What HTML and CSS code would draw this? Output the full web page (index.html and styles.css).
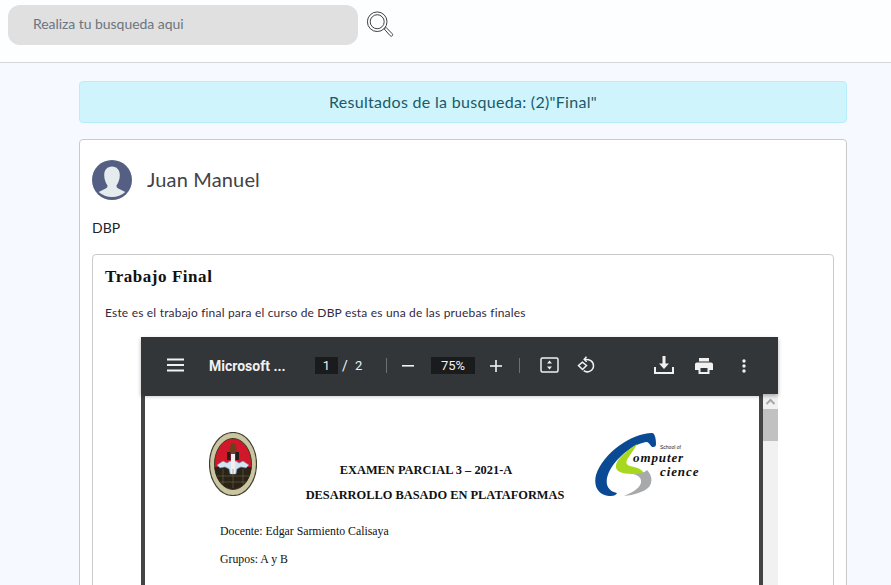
FILE: index.html
```html
<!DOCTYPE html>
<html lang="es">
<head>
<meta charset="utf-8">
<title>Resultados</title>
<link rel="stylesheet" href="styles.css">
</head>
<body>
<header class="topbar">
  <div class="search-input">Realiza tu busqueda aqui</div>
  <svg class="search-icon" width="28" height="28" viewBox="0 0 30 30" fill="none" stroke="#333" stroke-width="1">
    <circle cx="12" cy="11.5" r="10.5"/>
    <circle cx="12" cy="11.5" r="7.5"/>
    <path d="M19.5 19.2l2-1.7 6.6 6.9c.7.8.6 1.600 0 2.200-.7.6-1.500.6-2.200-.1z" fill="#fff"/>
  </svg>
</header>
<main class="content">
  <div class="alert">Resultados de la busqueda: (2)"Final"</div>
  <section class="card">
    <div class="author">
      <svg class="avatar" width="40" height="40" viewBox="0 0 40 40">
        <circle cx="20" cy="20" r="20" fill="#555f83"/>
        <path d="M20 6.500c4.800 0 7.800 3.500 7.800 8.500 0 4-1.300 7.500-3 10-.8 1.300 0 2.800 1.500 3.500l7 3.500a20 20 0 0 1-26.600 0l7-3.500c1.500-.7 2.300-2.200 1.500-3.500-1.700-2.500-3-6-3-10 0-5 3-8.500 7.800-8.500z" fill="#e6ebee"/>
      </svg>
      <span class="author-name">Juan Manuel</span>
    </div>
    <p class="course">DBP</p>
    <article class="post">
      <h2 class="post-title">Trabajo Final</h2>
      <p class="post-text">Este es el trabajo final para el curso de DBP esta es una de las pruebas finales</p>
      <div class="viewer">
        <div class="toolbar">
          <svg class="tb-menu" width="18" height="14" viewBox="0 0 18 14" fill="#f1f1f1"><rect x="0" y="0.500" width="17" height="2"/><rect x="0" y="6" width="17" height="2"/><rect x="0" y="11.500" width="17" height="2"/></svg>
          <span class="tb-title">Microsoft ...</span>
          <span class="tb-box tb-page">1</span>
          <span class="tb-sep-text">/</span>
          <span class="tb-total">2</span>
          <span class="tb-divider first"></span>
          <svg class="tb-minus" width="12" height="12" viewBox="0 0 12 12" fill="#f1f1f1"><rect x="0" y="5" width="12" height="1.600"/></svg>
          <span class="tb-box tb-zoom">75%</span>
          <svg class="tb-plus" width="12" height="12" viewBox="0 0 12 12" fill="#f1f1f1"><rect x="0" y="5.200" width="12" height="1.600"/><rect x="5.200" y="0" width="1.600" height="12"/></svg>
          <span class="tb-divider second"></span>
          <svg class="tb-fit" width="19" height="16" viewBox="0 0 19 16" fill="none"><rect x="1" y="1" width="17" height="14" rx="1.500" stroke="#f1f1f1" stroke-width="1.500"/><path d="M9.500 3.500l2.500 3H7zM9.500 12.500l2.500-3H7z" fill="#f1f1f1"/></svg>
          <svg class="tb-rotate" width="18" height="18" viewBox="0 0 18 18" fill="none" stroke="#f1f1f1" stroke-width="1.500"><path d="M5.500 6.200L1.500 9.500l4 4 4-4z"/><path d="M8 3.500c4-.6 8.500 1.800 8.500 6.200 0 5-6 7.800-9.800 5"/><path d="M9.500 .8L7.200 3.500l2.500 2.300" fill="none"/></svg>
          <svg class="tb-download" width="20" height="18" viewBox="0 0 20 18" fill="#f1f1f1"><path d="M8.500 0h3v7.500h3.500L10 13 5 7.500h3.500z"/><path d="M0 11h2v5h16v-5h2v7H0z"/></svg>
          <svg class="tb-print" width="18" height="16" viewBox="0 0 18 16" fill="#f1f1f1"><path d="M4 0h10v3.500H4z"/><path d="M2 4.500h14c1.100 0 2 .9 2 2V12h-3.500v4h-11v-4H0V6.500c0-1.100.9-2 2-2zM5.500 10v4h7v-4z" fill-rule="evenodd"/></svg>
          <svg class="tb-more" width="4" height="14" viewBox="0 0 4 14" fill="#f1f1f1"><circle cx="2" cy="2" r="1.700"/><circle cx="2" cy="7" r="1.700"/><circle cx="2" cy="12" r="1.700"/></svg>
        </div>
        <div class="viewer-body">
          <div class="page">
            <svg class="seal" width="48" height="64" viewBox="0 0 48 64">
              <ellipse cx="24" cy="32" rx="23.500" ry="31.500" fill="#cbc6a2" stroke="#3f3f2e" stroke-width="1.200"/>
              <ellipse cx="24" cy="32" rx="18.500" ry="25.500" fill="#d3172b" stroke="#3a3a28"/>
              <path d="M5.600 35h36.800c-.8 12.500-8.400 22-18.400 22S6.400 47.500 5.600 35z" fill="#2a2418"/>
              <path d="M8 33l6-4 4 2 3-2h6l3 2 4-2 6 4-3 3-5-1-4 2-1 5h-6l-1-5-4-2-5 1z" fill="#d3e4f3" stroke="#5d83ad" stroke-width=".6"/>
              <path d="M22 22h4v20h-4z" fill="#f0f0f0"/>
              <path d="M22 11.500h4l1.500 5-1 5.500h-5l-1-5.500z" fill="#6d3f1f"/>
              <path d="M18 20h3.500v8H18zM26.500 20H30v8h-3.500z" fill="#231f1a"/>
              <path d="M24 37v19M14 37v15M34 37v15M8 44h32M11 50h26" stroke="#7a6e45" stroke-width=".5" fill="none"/>
            </svg>
            <svg class="logo" width="104" height="70" viewBox="0 0 104 70">
              <path d="M57 2C37 2 8 22 1 44c-3 12 3 20 13 21 5 .5 7-1 8-3C11 60 9 50 15 39 23 25 40 12 52 11c2 .5 3 3 5 5 3 .5 4-1 4-3 0-5-1-11-4-11z" fill="#0a4a94"/>
              <path d="M42 13C34 18 21 28 21 35c-1 5 6 8 16 8 7 0 11 1 12 4 2-5-2-9-10-11-6-1-9-3-7-7 2-4 7-10 10-16z" fill="#a8d81e"/>
              <path d="M52 39c5 5 6 12 2 17-5 5-15 8-25 9 7-3 15-7 17-13 1-5-3-8-8-9 6 0 11-1 14-4z" fill="#a7a9ab"/>
              <text class="logo-small" x="65" y="18">School of</text>
              <text class="logo-big" x="38" y="31">omputer</text>
              <text class="logo-big" x="65" y="45">cience</text>
            </svg>
            <h3 class="doc-line one">EXAMEN PARCIAL 3 – 2021-A</h3>
            <h3 class="doc-line two">DESARROLLO BASADO EN PLATAFORMAS</h3>
            <p class="doc-text three">Docente: Edgar Sarmiento Calisaya</p>
            <p class="doc-text four">Grupos: A y B</p>
          </div>
          <div class="scrollbar">
            <div class="scroll-btn"><svg width="11" height="7" viewBox="0 0 11 7" fill="none" stroke="#a8a8a8" stroke-width="2"><path d="M1.500 6l4-4 4 4"/></svg></div>
            <div class="scroll-thumb"></div>
          </div>
        </div>
      </div>
    </article>
  </section>
</main>
</body>
</html>
```

FILE: styles.css
```css
* { box-sizing: border-box; }
html, body { margin: 0; height: 585px; overflow: hidden; }
body {
  background: #f6f9ff;
  font-family: "Lato", "Open Sans", sans-serif;
  color: #212529;
}
.topbar {
  height: 63px;
  background: #fdfeff;
  border-bottom: 1px solid #d4d6d8;
  padding: 5px 8px 0;
  display: flex;
  align-items: flex-start;
  gap: 8px;
}
.search-input {
  width: 350px;
  height: 40px;
  background: #e0e0e0;
  border-radius: 12px;
  padding: 0 25px;
  font-size: 14px;
  line-height: 38px;
  color: #6c757d;
  letter-spacing: -.05px;
}
.search-icon { margin: 6px 0 0; }
.content { padding: 18px 44px 0 79px; }
.alert {
  height: 42px;
  background: #cff4fc;
  border: 1px solid #b6effb;
  border-radius: 4px;
  text-align: center;
  font-size: 16px;
  line-height: 40px;
  color: #1b5a69;
  letter-spacing: .3px;
}
.card {
  margin-top: 16px;
  background: #fff;
  border: 1px solid #c9cacb;
  border-radius: 4px;
  padding: 20px 12px 0;
}
.author { display: flex; align-items: center; gap: 15px; height: 40px; }
.avatar { display: block; }
.author-name { font-size: 20px; color: #3f4347; letter-spacing: .15px; padding-bottom: 2px; }
.course { margin: 18px 0 0; font-size: 14px; line-height: 20px; }
.post {
  margin-top: 16px;
  border: 1px solid #c9cacb;
  border-radius: 4px;
  padding: 11px 12px 0;
  height: 400px;
}
.post-title {
  margin: 0;
  font-family: "Liberation Serif", serif;
  font-size: 17px;
  line-height: 22px;
  font-weight: 700;
  letter-spacing: .55px;
  color: #111;
}
.post-text {
  margin: 16px 0 0;
  font-size: 12px;
  line-height: 18px;
  color: #33293f;
  letter-spacing: .19px;
}
.viewer { margin: 15px 43px 0 36px; width: 637px; }
.toolbar {
  position: relative;
  height: 57px;
  background: #323639;
  box-shadow: 0 2px 4px rgba(0,0,0,.3);
  z-index: 1;
  color: #f1f1f1;
  font-family: "Roboto", "Liberation Sans", sans-serif;
  font-size: 13px;
}
.toolbar > * { position: absolute; }
.tb-menu { left: 26px; top: 21px; }
.tb-title { left: 68px; top: 21px; font-weight: 700; font-size: 14px; line-height: 16px; }
.tb-box { background: #191b1c; text-align: center; height: 17px; line-height: 17px; top: 20px; }
.tb-page { left: 174px; width: 23px; }
.tb-sep-text { left: 201px; top: 20px; line-height: 18px; font-size: 14px; }
.tb-total { left: 214px; top: 20px; line-height: 18px; }
.tb-divider { width: 1px; height: 15px; top: 21px; background: #6d7073; }
.tb-divider.first { left: 245px; }
.tb-divider.second { left: 378px; }
.tb-minus { left: 261px; top: 23px; }
.tb-zoom { left: 290px; width: 44px; }
.tb-plus { left: 349px; top: 23px; }
.tb-fit { left: 399px; top: 20px; }
.tb-rotate { left: 436px; top: 19px; }
.tb-download { left: 513px; top: 19px; }
.tb-print { left: 554px; top: 21px; }
.tb-more { left: 601px; top: 22px; }
.viewer-body { display: flex; height: 200px; background: #444; }
.page {
  position: relative;
  width: 614px;
  margin: 2px 4px 0 4px;
  background: #fff;
  font-family: "Liberation Serif", serif;
  color: #111;
}
.seal { position: absolute; left: 64px; top: 36px; }
.logo { position: absolute; left: 450px; top: 35px; }
.logo-small { font-family: "Liberation Sans", sans-serif; font-size: 5px; fill: #222; }
.logo-big { font-family: "Liberation Serif", serif; font-size: 13px; font-style: italic; font-weight: 700; letter-spacing: .9px; fill: #111; }
.doc-line {
  position: absolute;
  left: 0;
  margin: 0;
  text-align: center;
  font-size: 12.4px;
  line-height: 14px;
  font-weight: 700;
}
.doc-line.one { top: 67px; width: 562px; }
.doc-line.two { top: 92px; width: 580px; }
.doc-text { position: absolute; left: 75px; margin: 0; font-size: 11.8px; line-height: 14px; }
.doc-text.three { top: 128px; }
.doc-text.four { top: 156px; }
.scrollbar { width: 15px; background: #f1f1f1; }
.scroll-btn { height: 15px; display: flex; align-items: center; justify-content: center; }
.scroll-thumb { height: 32px; background: #c1c1c1; }
```
